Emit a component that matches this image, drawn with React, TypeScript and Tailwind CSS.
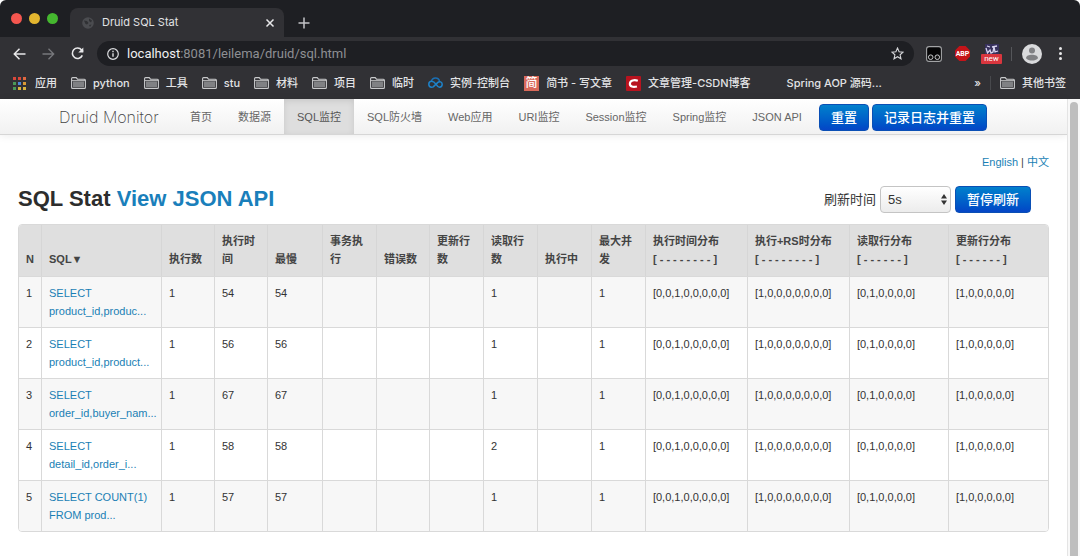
import React, { useState } from 'react';

interface Bookmark {
  label: string;
  icon: React.ReactNode;
}

interface SqlRow {
  sql: string;
  executeCount: number;
  totalTime: number;
  maxTime: number;
  fetchRows: number;
  concurrentMax: number;
  timeHistogram: string;
  rsHistogram: string;
  fetchHistogram: string;
  updateHistogram: string;
}

function FolderIcon() {
  return (
    <svg width="15" height="12" viewBox="0 0 15 12" fill="none" aria-hidden="true">
      <path d="M.6 1.6Q.6.6 1.6.6h3.6l1.3 1.6h6.9q1 0 1 1v7.2q0 1-1 1H1.6q-1 0-1-1z" stroke="#c9cacc" strokeWidth="1.1" />
      <path d="M2 4.400h11v5.600H2z" fill="#808184" />
      <path d="M1 3.6h13" stroke="#c9cacc" strokeWidth=".9" />
    </svg>
  );
}

function AppsIcon() {
  const colors = ['#d9483b', '#d9483b', '#e0683f', '#4b9a57', '#4c86d8', '#d99a36', '#4b9a57', '#d9b23c', '#d9b23c'];
  return (
    <svg width="13" height="13" viewBox="0 0 13 13" aria-hidden="true">
      {colors.map((color, i) => (
        <rect key={i} x={(i % 3) * 5} y={Math.floor(i / 3) * 5} width="3" height="3" fill={color} />
      ))}
    </svg>
  );
}

function CloudIcon() {
  return (
    <svg width="15" height="12" viewBox="0 0 15 12" fill="none" strokeWidth="1.5" strokeLinecap="round" aria-hidden="true">
      <path d="M3.4 4.3C3.9 2.2 5.5.9 7.5.9s3.700 1.400 4 3.500" stroke="#1a6fb4" />
      <path d="M5.200 9.900l4.700-4.500c1.700-1.500 4.300-.4 4.300 1.900 0 1.700-1.200 2.900-2.800 2.900-2.700 0-3.600-5.900-7.700-5.900C2 4.300.8 5.600.8 7.300s1.200 2.900 2.800 2.900c.7 0 1.200-.1 1.600-.3z" stroke="#1d82c9" />
    </svg>
  );
}

function CsdnIcon() {
  return (
    <svg width="15" height="15" viewBox="0 0 15 15" aria-hidden="true">
      <rect width="15" height="15" rx="1" fill="#b8131f" />
      <path d="M11.800 4.700C8.200 3.500 4.200 4.300 3.900 7.500c-.3 3.200 3.200 4 7 3" fill="none" stroke="#fff" strokeWidth="2.200" />
    </svg>
  );
}

function JianshuIcon() {
  return (
    <span className="flex h-[15px] w-[15px] items-center justify-center bg-[#d9695a] text-[12px] leading-none text-white">
      简
    </span>
  );
}

const bookmarks: Bookmark[] = [
  { label: 'python', icon: <FolderIcon /> },
  { label: '工具', icon: <FolderIcon /> },
  { label: 'stu', icon: <FolderIcon /> },
  { label: '材料', icon: <FolderIcon /> },
  { label: '项目', icon: <FolderIcon /> },
  { label: '临时', icon: <FolderIcon /> },
  { label: '实例-控制台', icon: <CloudIcon /> },
  { label: '简书 - 写文章', icon: <JianshuIcon /> },
  { label: '文章管理-CSDN博客', icon: <CsdnIcon /> },
  { label: 'Spring AOP 源码...', icon: <span className="w-[15px]" /> },
];

const navItems = ['首页', '数据源', 'SQL监控', 'SQL防火墙', 'Web应用', 'URI监控', 'Session监控', 'Spring监控', 'JSON API'];

const columns = [
  { label: 'N', width: 22 },
  { label: 'SQL▼', width: 120 },
  { label: '执行数', width: 53 },
  { label: '执行时间', width: 53 },
  { label: '最慢', width: 55 },
  { label: '事务执行', width: 54 },
  { label: '错误数', width: 53 },
  { label: '更新行数', width: 54 },
  { label: '读取行数', width: 54 },
  { label: '执行中', width: 54 },
  { label: '最大并发', width: 54 },
  { label: '执行时间分布', buckets: '[ - - - - - - - - ]', width: 102 },
  { label: '执行+RS时分布', buckets: '[ - - - - - - - - ]', width: 102 },
  { label: '读取行分布', buckets: '[ - - - - - - ]', width: 99 },
  { label: '更新行分布', buckets: '[ - - - - - - ]', width: 100 },
];

const totalWidth = columns.reduce((sum, column) => sum + column.width, 0);

const histograms = {
  timeHistogram: '[0,0,1,0,0,0,0,0]',
  rsHistogram: '[1,0,0,0,0,0,0,0]',
  fetchHistogram: '[0,1,0,0,0,0]',
  updateHistogram: '[1,0,0,0,0,0]',
};

const rows: SqlRow[] = [
  { sql: 'SELECT product_id,produc...', executeCount: 1, totalTime: 54, maxTime: 54, fetchRows: 1, concurrentMax: 1, ...histograms },
  { sql: 'SELECT product_id,product...', executeCount: 1, totalTime: 56, maxTime: 56, fetchRows: 1, concurrentMax: 1, ...histograms },
  { sql: 'SELECT order_id,buyer_nam...', executeCount: 1, totalTime: 67, maxTime: 67, fetchRows: 1, concurrentMax: 1, ...histograms },
  { sql: 'SELECT detail_id,order_i...', executeCount: 1, totalTime: 58, maxTime: 58, fetchRows: 2, concurrentMax: 1, ...histograms },
  { sql: 'SELECT COUNT(1) FROM prod...', executeCount: 1, totalTime: 57, maxTime: 57, fetchRows: 1, concurrentMax: 1, ...histograms },
];

function TabStrip() {
  return (
    <div className="flex h-[37px] items-end rounded-t-md bg-[#1e1f23]">
      <div className="flex h-full w-[70px] items-center gap-[7px] pl-[11px]">
        <span className="h-[11px] w-[11px] rounded-full bg-[#f4564f]" />
        <span className="h-[11px] w-[11px] rounded-full bg-[#e3b62f]" />
        <span className="h-[11px] w-[11px] rounded-full bg-[#45b72f]" />
      </div>
      <div className="flex h-[29px] w-[214px] items-center rounded-t-lg bg-[#313135] pr-[9px] pl-3">
        <svg width="12" height="12" viewBox="0 0 12 12" aria-hidden="true">
          <circle cx="6" cy="6" r="5.800" fill="#4b4c50" />
          <path d="M2 3.500l3 .5 1.500 2L5 7.500 3.500 7zM7 1.500l3 2-1 2-2-1.500zM7 8l2.500-.5-1.500 2.500z" fill="#303134" />
        </svg>
        <span className="ml-2 flex-1 font-[Inter,sans-serif] text-[11px] text-[#e2e3e5]">Druid SQL Stat</span>
        <button aria-label="关闭标签页">
          <svg width="10" height="10" viewBox="0 0 10 10" stroke="#e8e8ea" strokeWidth="1.500" aria-hidden="true">
            <path d="M1.500 1.500l7 7M8.500 1.500l-7 7" />
          </svg>
        </button>
      </div>
      <button className="flex h-[29px] items-center pl-[14px]" aria-label="新标签页">
        <svg width="12" height="12" viewBox="0 0 12 12" stroke="#c3c4c7" strokeWidth="1.500" aria-hidden="true">
          <path d="M6 .5v11M.5 6h11" />
        </svg>
      </button>
    </div>
  );
}

function Toolbar() {
  return (
    <div className="flex h-[33px] items-center bg-[#313135] pr-[18px] pl-[13px]">
      <div className="flex w-[84px] items-center gap-[16px]">
        <button aria-label="后退">
          <svg width="13" height="12" viewBox="0 0 13 12" fill="none" stroke="#e8e8ea" strokeWidth="1.500" aria-hidden="true">
            <path d="M12.500 6H1.500M6.500.8L1.300 6l5.200 5.200" />
          </svg>
        </button>
        <button aria-label="前进">
          <svg width="13" height="12" viewBox="0 0 13 12" fill="none" stroke="#77787c" strokeWidth="1.300" aria-hidden="true">
            <path d="M.5 6h11M6.500.8L11.700 6l-5.200 5.200" />
          </svg>
        </button>
        <button aria-label="重新加载">
          <svg width="13" height="13" viewBox="0 0 13 13" fill="none" stroke="#e8e8ea" strokeWidth="1.600" aria-hidden="true">
            <path d="M11.300 8.400A5.200 5.200 0 1 1 10.600 3L12 4.600" />
            <path d="M12.300.5v5H7.300z" fill="#e8e8ea" stroke="none" />
          </svg>
        </button>
      </div>
      <div className="flex h-[25px] flex-1 items-center rounded-full bg-[#1e1f23] pr-[10px] pl-[10px]">
        <svg width="12" height="12" viewBox="0 0 12 12" fill="none" stroke="#dcdde0" strokeWidth="1.200" aria-hidden="true">
          <circle cx="6" cy="6" r="5.300" />
          <path d="M6 5.300v3.500M6 2.800v1.400" strokeWidth="1.400" />
        </svg>
        <p className="ml-2 flex-1 text-[13px] text-[#8e8f93]">
          <span className="text-[#f0f0f2]">localhost</span>:8081/leilema/druid/sql.html
        </p>
        <button aria-label="收藏">
          <svg width="13" height="13" viewBox="0 0 13 13" fill="none" stroke="#d5d6d9" strokeWidth="1.100" aria-hidden="true">
            <path d="M6.500 1l1.600 3.700 4 .4-3 2.700.9 4-3.500-2.100L3 11.800l.9-4-3-2.700 4-.4z" />
          </svg>
        </button>
      </div>
      <div className="ml-3 flex items-center">
        <button aria-label="脚本扩展">
          <svg width="16" height="16" viewBox="0 0 16 16" aria-hidden="true">
            <rect x=".6" y=".6" width="14.800" height="14.800" rx="2.500" fill="#050506" stroke="#a3a4a6" strokeWidth="1.100" />
            <circle cx="4.700" cy="11.200" r="2.300" fill="#111" stroke="#c7c8ca" />
            <circle cx="11.300" cy="11.200" r="2.300" fill="#111" stroke="#c7c8ca" />
          </svg>
        </button>
        <button aria-label="Adblock Plus" className="ml-[13px]">
          <svg width="15" height="15" viewBox="0 0 15 15" aria-hidden="true">
            <path d="M4.400 0h6.200L15 4.400v6.200L10.600 15H4.400L0 10.600V4.400z" fill="#c41419" />
            <text x="7.500" y="10" textAnchor="middle" fill="#fff" fontSize="7" fontWeight="700">ABP</text>
          </svg>
        </button>
        <button aria-label="新扩展" className="relative ml-[11px] h-[20px] w-[21px]">
          <svg className="mx-auto" width="14" height="20" viewBox="0 0 14 20" aria-hidden="true">
            <rect width="14" height="14" fill="#37315c" />
            <path d="M1 4l1.500 5 2.500-3 1 3 2-1 1-5 1 5 3-1M2 2l3 1M7 3l5-1" stroke="#d8d4ee" strokeWidth="1.300" fill="none" />
          </svg>
          <span className="absolute inset-x-0 bottom-0 rounded-[1px] bg-[#d9363e] text-center text-[8px] leading-[10px] text-white">
            new
          </span>
        </button>
        <span className="ml-[9px] h-[14px] w-px bg-[#55565a]" />
        <button aria-label="用户" className="ml-[10px]">
          <svg width="20" height="20" viewBox="0 0 20 20" aria-hidden="true">
            <circle cx="10" cy="10" r="10" fill="#d9dadc" />
            <circle cx="10" cy="6.500" r="3" fill="#808184" />
            <path d="M4 14.200c0-4.600 12-4.600 12 0-2.600 3.200-9.400 3.200-12 0z" fill="#808184" />
          </svg>
        </button>
        <button aria-label="菜单" className="ml-[17px]">
          <svg width="3" height="13" viewBox="0 0 3 13" fill="#e8e8ea" aria-hidden="true">
            <circle cx="1.500" cy="1.500" r="1.500" />
            <circle cx="1.500" cy="6.500" r="1.500" />
            <circle cx="1.500" cy="11.500" r="1.500" />
          </svg>
        </button>
      </div>
    </div>
  );
}

function BookmarkBar() {
  return (
    <div className="flex h-[29px] items-center bg-[#313135] pr-[14px] pb-[3px] pl-[13px] font-[Inter,'Noto_Sans_CJK_SC',sans-serif] text-[11px] font-medium whitespace-nowrap text-[#e2e3e5]">
      <a href="#" className="flex items-center gap-[9px]">
        <AppsIcon />
        应用
      </a>
      {bookmarks.map((bookmark) => (
        <a key={bookmark.label} href="#" className="ml-[14px] flex items-center gap-[7px]">
          {bookmark.icon}
          {bookmark.label}
        </a>
      ))}
      <button className="ml-auto" aria-label="更多书签">»</button>
      <span className="mx-[9px] h-[14px] w-px bg-[#48494d]" />
      <a href="#" className="flex items-center gap-[7px]">
        <FolderIcon />
        其他书签
      </a>
    </div>
  );
}

function PrimaryButton({ children, onClick }: { children: React.ReactNode; onClick?: () => void }) {
  return (
    <button
      onClick={onClick}
      className="h-[27px] rounded border border-[#0a4fb5] bg-linear-to-b from-[#0480cc] to-[#0645c6] px-[11px] text-[13px] font-medium text-white"
    >
      {children}
    </button>
  );
}

function NavBar() {
  const [active, setActive] = useState('SQL监控');

  return (
    <nav className="flex h-[36px] items-center border-b border-[#d6d6d6] bg-linear-to-b from-white to-[#f1f1f1] pl-[59px] whitespace-nowrap text-[#666] shadow-[0_1px_8px_rgba(0,0,0,0.08)]">
      <a href="#" className="mr-[19px] w-[99px] font-[Inter,sans-serif] text-[16px] font-extralight text-[#444]">
        Druid Monitor
      </a>
      {navItems.map((item) => (
        <a
          key={item}
          href="#"
          onClick={() => setActive(item)}
          className={`flex h-full items-center px-[13px] pt-[2px] text-[11px] ${
            item === active ? 'bg-[#dedede] text-[#555] shadow-[inset_0_2px_6px_rgba(0,0,0,0.1)]' : ''
          }`}
        >
          {item}
        </a>
      ))}
      <div className="ml-1 flex gap-[3px] pt-[2px]">
        <PrimaryButton>重置</PrimaryButton>
        <PrimaryButton>记录日志并重置</PrimaryButton>
      </div>
    </nav>
  );
}

function SqlTable() {
  return (
    <table className="w-full table-fixed border-separate border-spacing-0 overflow-hidden rounded border border-[#d9d9d9] text-left text-[11px] leading-[18px] text-[#333]">
      <colgroup>
        {columns.map((column) => (
          <col key={column.label} style={{ width: `${(column.width / totalWidth) * 100}%` }} />
        ))}
      </colgroup>
      <thead className="bg-[#dfdfdf]">
        <tr>
          {columns.map((column) => (
            <th key={column.label} className="border-l border-[#d6d6d6] px-[7px] pt-[7px] pb-2 align-bottom font-bold text-[#444] first:border-l-0">
              {column.label}
              {column.buckets && <span className="block">{column.buckets}</span>}
            </th>
          ))}
        </tr>
      </thead>
      <tbody>
        {rows.map((row, index) => {
          const cells = [
            index + 1,
            <a key="sql" href="#" className="text-[#1a7fb5]">{row.sql}</a>,
            row.executeCount,
            row.totalTime,
            row.maxTime,
            '',
            '',
            '',
            row.fetchRows,
            '',
            row.concurrentMax,
            row.timeHistogram,
            row.rsHistogram,
            row.fetchHistogram,
            row.updateHistogram,
          ];
          return (
            <tr key={row.sql} className="odd:bg-[#f7f7f7]">
              {cells.map((cell, i) => (
                <td key={i} className="border-t border-l border-[#d9d9d9] px-[7px] py-[7px] align-top first:border-l-0">
                  {cell}
                </td>
              ))}
            </tr>
          );
        })}
      </tbody>
    </table>
  );
}

export default function App() {
  const [paused, setPaused] = useState(false);

  return (
    <div className="flex min-h-screen flex-col bg-white">
      <header className="font-[Roboto,'Noto_Sans_CJK_SC',sans-serif]">
        <TabStrip />
        <Toolbar />
        <BookmarkBar />
      </header>
      <div className="flex flex-1 font-['Liberation_Sans','Noto_Sans_CJK_SC',sans-serif]">
        <div className="min-w-0 flex-1">
          <NavBar />
          <main className="px-[18px] pt-[18px]">
            <div className="text-right text-[11px] leading-[18px] text-[#444]">
              <a href="#" className="text-[#1a7fb5]">English</a> | <a href="#" className="text-[#1a7fb5]">中文</a>
            </div>
            <div className="flex items-center justify-between pt-[15px] pb-[11px]">
              <h1 className="pb-[2px] text-[22px] leading-[25px] font-bold text-[#2d2d2d]">
                SQL Stat <a href="#" className="text-[#1a7fbb]">View JSON API</a>
              </h1>
              <div className="mr-[18px] flex items-center gap-1">
                <label htmlFor="refresh" className="text-[13px] text-[#333]">刷新时间</label>
                <div className="relative">
                  <select
                    id="refresh"
                    defaultValue="5s"
                    className="block h-[27px] w-[71px] appearance-none rounded border border-[#c4c4c4] bg-linear-to-b from-white to-[#ececec] px-[7px] text-[13px] text-[#333]"
                  >
                    <option>5s</option>
                    <option>10s</option>
                    <option>20s</option>
                    <option>30s</option>
                    <option>60s</option>
                  </select>
                  <svg className="pointer-events-none absolute top-2 right-1" width="6" height="11" viewBox="0 0 6 11" fill="#333" aria-hidden="true">
                    <path d="M3 0l3 4.500H0zM3 11L0 6.500h6z" />
                  </svg>
                </div>
                <PrimaryButton onClick={() => setPaused(!paused)}>{paused ? '开始刷新' : '暂停刷新'}</PrimaryButton>
              </div>
            </div>
            <SqlTable />
          </main>
        </div>
        <div className="w-[13px] border-l border-[#e4e4e4] bg-[#f8f8f8] px-[2px] pt-[3px]">
          <div className="h-full rounded-t-full bg-[#bebebe]" />
        </div>
      </div>
    </div>
  );
}
